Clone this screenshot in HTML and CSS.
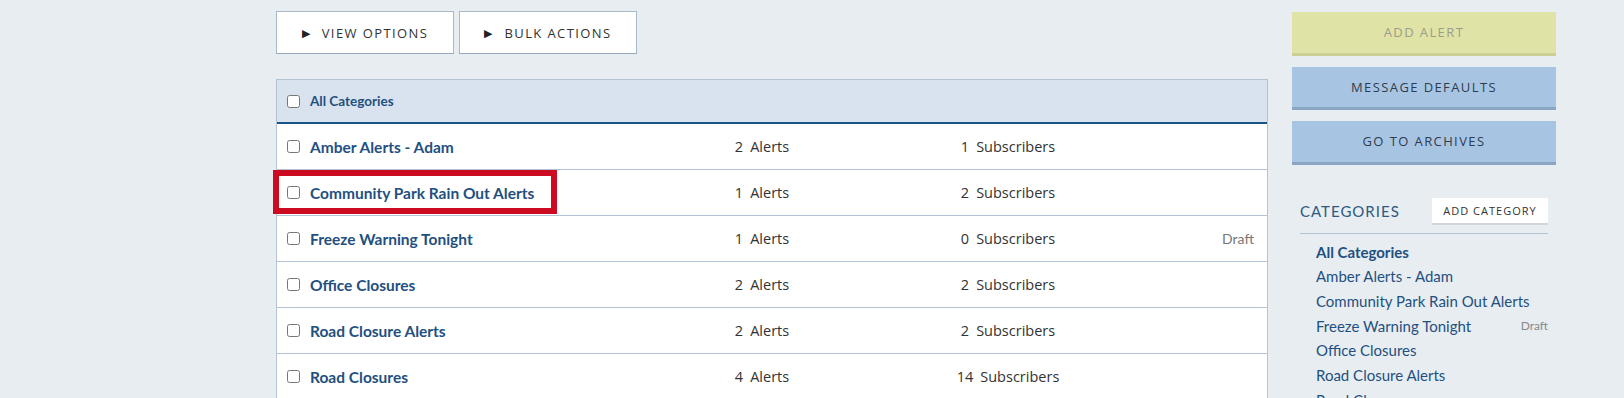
FILE: index.html
```html
<!DOCTYPE html>
<html>
<head>
<meta charset="utf-8">
<link rel="stylesheet" href="styles.css">
</head>
<body>
<div class="page">
  <main class="main">
    <div class="toolbar">
      <button class="tool-btn"><span class="tri">&#9654;</span>VIEW OPTIONS</button>
      <button class="tool-btn"><span class="tri">&#9654;</span>BULK ACTIONS</button>
    </div>
    <div class="table">
      <div class="row head">
        <label class="name"><input type="checkbox" class="cb">All Categories</label>
      </div>
      <div class="row">
        <label class="name"><input type="checkbox" class="cb">Amber Alerts - Adam</label>
        <div class="count"><span class="num">2</span>Alerts</div>
        <div class="count"><span class="num">1</span>Subscribers</div>
        <div class="status"></div>
      </div>
      <div class="row">
        <label class="name"><input type="checkbox" class="cb">Community Park Rain Out Alerts</label>
        <div class="count"><span class="num">1</span>Alerts</div>
        <div class="count"><span class="num">2</span>Subscribers</div>
        <div class="status"></div>
        <div class="highlight"></div>
      </div>
      <div class="row">
        <label class="name"><input type="checkbox" class="cb">Freeze Warning Tonight</label>
        <div class="count"><span class="num">1</span>Alerts</div>
        <div class="count"><span class="num">0</span>Subscribers</div>
        <div class="status">Draft</div>
      </div>
      <div class="row">
        <label class="name"><input type="checkbox" class="cb">Office Closures</label>
        <div class="count"><span class="num">2</span>Alerts</div>
        <div class="count"><span class="num">2</span>Subscribers</div>
        <div class="status"></div>
      </div>
      <div class="row">
        <label class="name"><input type="checkbox" class="cb">Road Closure Alerts</label>
        <div class="count"><span class="num">2</span>Alerts</div>
        <div class="count"><span class="num">2</span>Subscribers</div>
        <div class="status"></div>
      </div>
      <div class="row">
        <label class="name"><input type="checkbox" class="cb">Road Closures</label>
        <div class="count"><span class="num">4</span>Alerts</div>
        <div class="count"><span class="num">14</span>Subscribers</div>
        <div class="status"></div>
      </div>
    </div>
  </main>
  <aside class="side">
    <button class="side-btn add">ADD ALERT</button>
    <button class="side-btn blue">MESSAGE DEFAULTS</button>
    <button class="side-btn blue">GO TO ARCHIVES</button>
    <div class="cat-head">
      <span class="cat-title">CATEGORIES</span>
      <button class="add-cat">ADD CATEGORY</button>
    </div>
    <ul class="cat-list">
      <li class="active">All Categories</li>
      <li>Amber Alerts - Adam</li>
      <li>Community Park Rain Out Alerts</li>
      <li><span>Freeze Warning Tonight</span><span class="cat-draft">Draft</span></li>
      <li>Office Closures</li>
      <li>Road Closure Alerts</li>
      <li>Road Closures</li>
    </ul>
  </aside>
</div>
</body>
</html>
```
FILE: styles.css
```css
* { box-sizing: border-box; }
html, body { margin: 0; padding: 0; }
body {
  background: #e8edf2;
  font-family: Lato, "Liberation Sans", sans-serif;
  height: 398px;
  overflow: hidden;
}
.page {
  display: flex;
  gap: 24px;
  padding: 11px 0 0 276px;
}
.main { width: 992px; }
.toolbar { display: flex; gap: 5px; }
.tool-btn {
  width: 178px;
  height: 43px;
  background: #fff;
  border: 1px solid #a9b8ca;
  border-bottom-color: #98a8bb;
  font-family: "Open Sans", sans-serif;
  font-size: 13px;
  letter-spacing: 1.4px;
  color: #333;
  display: flex;
  align-items: center;
  justify-content: center;
  gap: 12px;
  padding: 0 0 0 0;
}
.tri { font-size: 11px; color: #222; letter-spacing: 0; }
.table {
  margin-top: 25px;
  background: #fff;
  border: 1px solid #b3c3d6;
  border-bottom: none;
}
.row {
  position: relative;
  display: grid;
  grid-template-columns: 415px 140px 352px 1fr;
  align-items: center;
  height: 46px;
  border-bottom: 1px solid #b3c3d6;
}
.row.head {
  height: 44px;
  background: #d9e3ef;
  border-bottom: 2px solid #1a5487;
}
.name {
  display: flex;
  align-items: center;
  padding-left: 10px;
  font-weight: 700;
  font-size: 15.5px;
  color: #1f5080;
}
.head .name { font-size: 13.5px; }
.cb {
  margin: 0 10px 0 0;
  width: 13px;
  height: 13px;
}
.count {
  text-align: center;
  font-family: "Open Sans", sans-serif;
  font-size: 14.5px;
  color: #333;
}
.num { margin-right: 7px; }
.status {
  text-align: right;
  padding-right: 13px;
  font-size: 14px;
  color: #777;
}
.highlight {
  position: absolute;
  left: -4px;
  top: 0;
  width: 284px;
  height: 44px;
  border: 6px solid #cc0a22;
}
.side { width: 264px; padding-top: 1px; }
.side-btn {
  display: block;
  width: 100%;
  height: 43.5px;
  border: none;
  border-bottom: 3px solid #8ba6c3;
  background: #a7c5e3;
  font-family: "Open Sans", sans-serif;
  font-size: 13px;
  letter-spacing: 1.4px;
  color: #2e3d4c;
  margin-bottom: 11px;
  padding: 0;
}
.side-btn.add {
  background: #dfe3a6;
  border-bottom-color: #cdd094;
  color: #9d9d8c;
}
.cat-head {
  margin: 33px 8px 0;
  display: flex;
  align-items: center;
  justify-content: space-between;
  padding-bottom: 8px;
  border-bottom: 1px solid #b3c3d6;
}
.cat-title {
  font-size: 15px;
  letter-spacing: 1px;
  color: #2c5a80;
}
.add-cat {
  width: 116px;
  height: 27px;
  background: #fff;
  border: none;
  border-bottom: 2px solid #d2d6dc;
  font-family: "Open Sans", sans-serif;
  font-size: 11px;
  letter-spacing: 1px;
  color: #333;
  padding: 0;
}
.cat-list {
  list-style: none;
  margin: 6px 8px 0 24px;
  padding: 0;
  font-size: 15px;
  line-height: 24.7px;
  color: #1f5080;
}
.cat-list li {
  display: flex;
  justify-content: space-between;
  align-items: center;
  height: 24.7px;
}
.cat-list .active { font-weight: 700; }
.cat-draft { font-size: 12px; color: #888; }
```
